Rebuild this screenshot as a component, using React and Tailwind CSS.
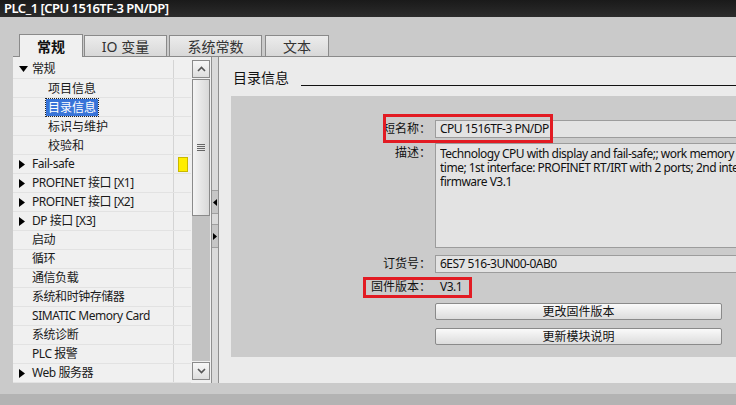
import React from 'react';

const font = { fontFamily: '"Noto Sans", "Noto Sans CJK SC", sans-serif' };

const treeRows = [
  { label: '常规', level: 0, arrow: 'down' },
  { label: '项目信息', level: 1 },
  { label: '目录信息', level: 1, selected: true },
  { label: '标识与维护', level: 1 },
  { label: '校验和', level: 1 },
  { label: 'Fail-safe', level: 0, arrow: 'right', flag: true },
  { label: 'PROFINET 接口 [X1]', level: 0, arrow: 'right' },
  { label: 'PROFINET 接口 [X2]', level: 0, arrow: 'right' },
  { label: 'DP 接口 [X3]', level: 0, arrow: 'right' },
  { label: '启动', level: 0 },
  { label: '循环', level: 0 },
  { label: '通信负载', level: 0 },
  { label: '系统和时钟存储器', level: 0 },
  { label: 'SIMATIC Memory Card', level: 0 },
  { label: '系统诊断', level: 0 },
  { label: 'PLC 报警', level: 0 },
  { label: 'Web 服务器', level: 0, arrow: 'right' },
];

function Arrow({ dir }) {
  if (dir === 'down') {
    return (
      <svg width="9" height="6" viewBox="0 0 9 6" className="shrink-0">
        <path d="M0 0h9L4.5 6z" fill="#000" />
      </svg>
    );
  }
  return (
    <svg width="6" height="9" viewBox="0 0 6 9" className="shrink-0">
      <path d="M0 0l6 4.5L0 9z" fill="#000" />
    </svg>
  );
}

function TreeRow({ row }) {
  return (
    <div className="flex h-[19px] border-b border-[#e2e2e2]">
      <div className="w-[160px] flex items-center">
        {row.level === 0 ? (
          <>
            <div className="w-[19px] pl-[6px] flex items-center">
              {row.arrow && <Arrow dir={row.arrow} />}
            </div>
            <span className="text-[12px] text-[#1a1a1a] whitespace-nowrap tracking-[-0.45px]">{row.label}</span>
          </>
        ) : (
          <div className="pl-[33px] flex items-center">
            <span
              className={`text-[12px] whitespace-nowrap px-[2px] leading-[17px] ${
                row.selected
                  ? 'bg-[#3874d8] text-white outline outline-1 outline-dotted outline-[#222]'
                  : 'text-[#1a1a1a]'
              }`}
            >
              {row.label}
            </span>
          </div>
        )}
      </div>
      <div className="flex-1 border-l border-[#d4d4d4] flex items-center justify-center">
        {row.flag && <div className="w-[10px] h-[15px] bg-[#ffee00] border border-[#c9b800]" />}
      </div>
    </div>
  );
}

function ScrollButton({ up }) {
  return (
    <div className="h-[18px] border border-[#8a8a8a] bg-gradient-to-b from-[#f7f7f7] to-[#dedede] flex items-center justify-center">
      <svg width="9" height="6" viewBox="0 0 9 6">
        <path
          d={up ? 'M1 5l3.5-3.5L8 5' : 'M1 1l3.5 3.5L8 1'}
          stroke="#555"
          strokeWidth="1.6"
          fill="none"
        />
      </svg>
    </div>
  );
}

function Field({ children, className = '' }) {
  return (
    <div className={`w-[301px] bg-[#e3e3e3] border border-[#9c9c9c] border-r-0 pl-[4px] text-[12px] text-[#111] tracking-[-0.5px] ${className}`}>
      {children}
    </div>
  );
}

function Label({ children }) {
  return <div className="w-[200px] text-right text-[12px] text-[#111] shrink-0 whitespace-nowrap">{children}</div>;
}

export default function App() {
  return (
    <div className="w-[736px] h-[405px] bg-[#cacaca] overflow-hidden flex flex-col" style={font}>
      {/* title bar */}
      <div className="h-[17px] bg-gradient-to-b from-[#1a1a1a] to-[#2c2c2c] pl-[4px] flex items-center">
        <span className="text-white text-[13px] font-semibold leading-none whitespace-nowrap tracking-[-0.5px]">
          PLC_1 [CPU 1516TF-3 PN/DP]
        </span>
      </div>

      {/* tabs */}
      <div className="h-[39px] flex items-end pl-[19px] gap-[1px]">
        <div className="w-[64px] h-[23px] -mb-px relative z-10 bg-[#f0f0f0] border border-b-0 border-[#8a8a8a] flex items-center justify-center">
          <span className="text-[14px] font-bold text-[#111]">常规</span>
        </div>
        <div className="w-[83px] h-[21px] bg-gradient-to-b from-[#ececec] to-[#d8d8d8] border border-b-0 border-[#8a8a8a] flex items-center justify-center">
          <span className="text-[14px] text-[#333]">IO 变量</span>
        </div>
        <div className="w-[93px] h-[21px] ml-[1px] bg-gradient-to-b from-[#ececec] to-[#d8d8d8] border border-b-0 border-[#8a8a8a] flex items-center justify-center">
          <span className="text-[14px] text-[#333]">系统常数</span>
        </div>
        <div className="w-[64px] h-[21px] ml-[2px] bg-gradient-to-b from-[#ececec] to-[#d8d8d8] border border-b-0 border-[#8a8a8a] flex items-center justify-center">
          <span className="text-[14px] text-[#333]">文本</span>
        </div>
      </div>

      {/* main panel */}
      <div className="ml-[13px] h-[327px] border-t border-[#8a8a8a] flex">
        {/* tree */}
        <div className="w-[178px] bg-[#f0f0f0] pt-[3px] overflow-hidden">
          {treeRows.map((row) => (
            <TreeRow key={row.label} row={row} />
          ))}
        </div>

        {/* scrollbar */}
        <div className="w-[20px] bg-[#f0f0f0] px-[1px] pt-[3px] pb-[3px] flex flex-col">
          <ScrollButton up />
          <div className="flex-1 bg-[#c2c2c2] mt-[1px] mb-[1px]">
            <div className="h-[137px] border border-[#8a8a8a] bg-gradient-to-r from-[#f4f4f4] to-[#d9d9d9] flex items-center justify-center">
              <div className="flex flex-col gap-[1px]">
                <div className="w-[8px] h-px bg-[#666]" />
                <div className="w-[8px] h-px bg-[#666]" />
                <div className="w-[8px] h-px bg-[#666]" />
                <div className="w-[8px] h-px bg-[#666]" />
              </div>
            </div>
          </div>
          <ScrollButton />
        </div>

        {/* splitter */}
        <div className="w-[8px] border-l border-r border-[#8f8f8f] bg-[#dadada] flex flex-col pt-[133px]">
          <div className="h-[24px] bg-[#c6c6c6] border-y border-[#a0a0a0] flex items-center justify-center">
            <svg width="4" height="7" viewBox="0 0 4 7">
              <path d="M4 0v7L0 3.5z" fill="#000" />
            </svg>
          </div>
          <div className="h-[10px]" />
          <div className="h-[24px] bg-[#c6c6c6] border-y border-[#a0a0a0] flex items-center justify-center">
            <svg width="4" height="7" viewBox="0 0 4 7">
              <path d="M0 0v7l4-3.5z" fill="#000" />
            </svg>
          </div>
        </div>

        {/* content */}
        <div className="flex-1 bg-[#ebebeb] pt-[13px] overflow-hidden">
          <div className="flex items-end pl-[14px] h-[16px]">
            <span className="text-[14px] text-[#111] leading-[16px] whitespace-nowrap">目录信息</span>
            <div className="flex-1 ml-[12px] border-b border-[#111]" />
          </div>

          <div className="mt-[10px] ml-[12px] h-[261px] bg-[#cbcbcb] relative overflow-hidden pt-[24px]">
            <div className="flex items-center gap-[4px] h-[18px]">
              <Label>短名称：</Label>
              <Field className="h-[18px] leading-[16px]">CPU 1516TF-3 PN/DP</Field>
            </div>

            <div className="flex items-start gap-[4px] mt-[5px]">
              <Label>
                <div className="leading-[16px] pt-[2px]">描述：</div>
              </Label>
              <Field className="h-[105px] leading-[14px] pt-[3px] overflow-hidden">
                <div className="whitespace-nowrap overflow-hidden">
                  Technology CPU with display and fail-safe;; work memory
                </div>
                <div className="whitespace-nowrap overflow-hidden">
                  time; 1st interface: PROFINET RT/IRT with 2 ports; 2nd interface
                </div>
                <div className="whitespace-nowrap overflow-hidden">firmware V3.1</div>
              </Field>
            </div>

            <div className="flex items-center gap-[4px] mt-[7px] h-[18px]">
              <Label>订货号：</Label>
              <Field className="h-[18px] leading-[16px]">6ES7 516-3UN00-0AB0</Field>
            </div>

            <div className="flex items-center gap-[4px] mt-[5px] h-[18px]">
              <Label>固件版本：</Label>
              <div className="pl-[5px] text-[12px] text-[#111] tracking-[-0.5px]">V3.1</div>
            </div>

            <div className="ml-[204px] mt-[7px] w-[287px] flex flex-col gap-[8px]">
              <button className="h-[17px] border border-[#8a8a8a] rounded-[2px] bg-gradient-to-b from-[#fafafa] to-[#dcdcdc] text-[12px] text-[#111] leading-none">
                更改固件版本
              </button>
              <button className="h-[17px] border border-[#8a8a8a] rounded-[2px] bg-gradient-to-b from-[#fafafa] to-[#dcdcdc] text-[12px] text-[#111] leading-none">
                更新模块说明
              </button>
            </div>

            {/* highlight markers */}
            <div className="absolute left-[152px] top-[18px] w-[170px] h-[29px] border-[3px] border-[#e21b23]" />
            <div className="absolute left-[132px] top-[181px] w-[109px] h-[21px] border-[3px] border-[#e21b23]" />
          </div>
        </div>
      </div>

      {/* bottom bands */}
      <div className="h-[11px] bg-[#cacaca]" />
      <div className="h-[11px] bg-[#b3b3b3]" />
    </div>
  );
}
